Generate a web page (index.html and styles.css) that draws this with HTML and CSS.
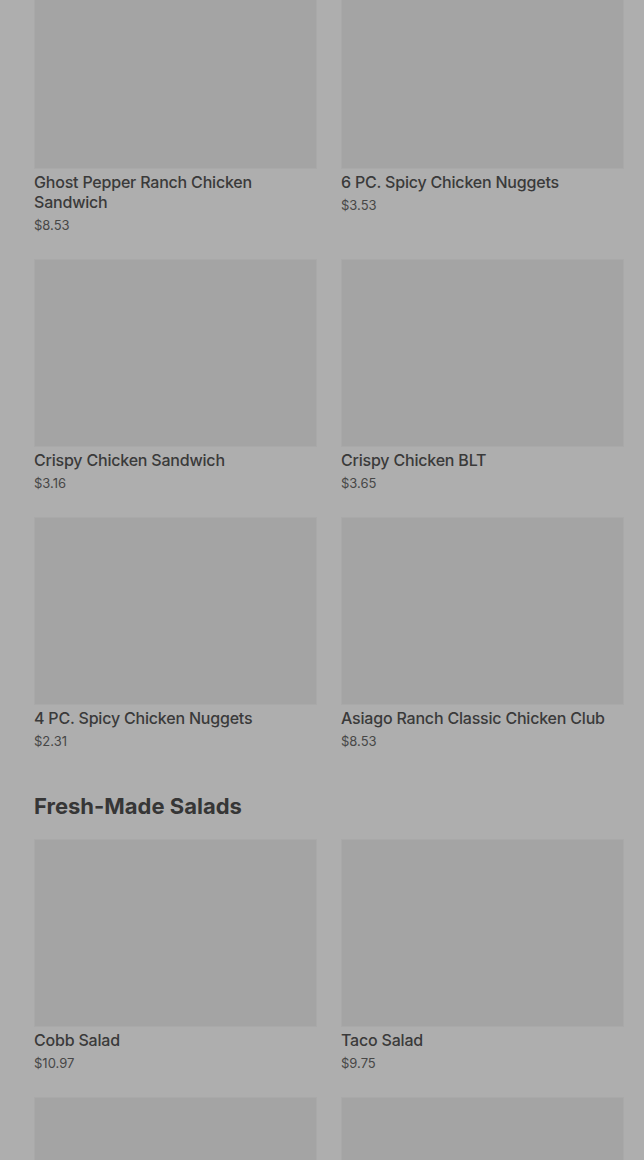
FILE: index.html
```html
<!DOCTYPE html>
<html lang="en">
<head>
    <meta charset="UTF-8">
    <meta name="viewport" content="width=device-width, initial-scale=1.0">
    <title>Menu</title>
    <link rel="stylesheet" href="styles.css">
</head>
<body>
<div class="menu">
    <div class="menu-grid first">
        <div class="menu-item">
            <div class="item-img"></div>
            <div class="item-name">Ghost Pepper Ranch Chicken Sandwich</div>
            <div class="item-price">$8.53</div>
        </div>
        <div class="menu-item">
            <div class="item-img"></div>
            <div class="item-name">6 PC. Spicy Chicken Nuggets</div>
            <div class="item-price">$3.53</div>
        </div>
        <div class="menu-item">
            <div class="item-img"></div>
            <div class="item-name">Crispy Chicken Sandwich</div>
            <div class="item-price">$3.16</div>
        </div>
        <div class="menu-item">
            <div class="item-img"></div>
            <div class="item-name">Crispy Chicken BLT</div>
            <div class="item-price">$3.65</div>
        </div>
        <div class="menu-item">
            <div class="item-img"></div>
            <div class="item-name">4 PC. Spicy Chicken Nuggets</div>
            <div class="item-price">$2.31</div>
        </div>
        <div class="menu-item">
            <div class="item-img"></div>
            <div class="item-name">Asiago Ranch Classic Chicken Club</div>
            <div class="item-price">$8.53</div>
        </div>
    </div>

    <h2 class="section-title">Fresh-Made Salads</h2>
    <div class="menu-grid">
        <div class="menu-item">
            <div class="item-img"></div>
            <div class="item-name">Cobb Salad</div>
            <div class="item-price">$10.97</div>
        </div>
        <div class="menu-item">
            <div class="item-img"></div>
            <div class="item-name">Taco Salad</div>
            <div class="item-price">$9.75</div>
        </div>
        <!-- следующий ряд уходит за нижний край экрана -->
        <div class="menu-item">
            <div class="item-img"></div>
        </div>
        <div class="menu-item">
            <div class="item-img"></div>
        </div>
    </div>
</div>
</body>
</html>
```

FILE: styles.css
```css
/* Общие стили */
body { font-family: Inter, "Liberation Sans", sans-serif; margin: 0; padding: 0; background-color: #aeaeae; color: #383838; height: 1160px; overflow: hidden; }

.menu {
    padding: 0 20px 0 34px;
}

.menu-grid {
    display: grid;
    grid-template-columns: 1fr 1fr;
    column-gap: 24px;
}

.menu-grid.first {
    margin-top: -19px;
}

.menu-item {
    margin-bottom: 25px;
}

.item-img {
    height: 186px;
    background-color: #a4a4a4;
    border: 1px solid #a9a9a9;
}

.item-name {
    margin-top: 3px;
    font-size: 16px;
    line-height: 20px;
    font-weight: 500;
    letter-spacing: -0.2px;
    color: #3a3a3a;
}

.item-price {
    margin-top: 4px;
    font-size: 13px;
    line-height: 18px;
    color: #474747;
}

.section-title {
    margin: 17px 0 19px;
    font-size: 22px;
    line-height: 28px;
    font-weight: 700;
    color: #363636;
}
```
